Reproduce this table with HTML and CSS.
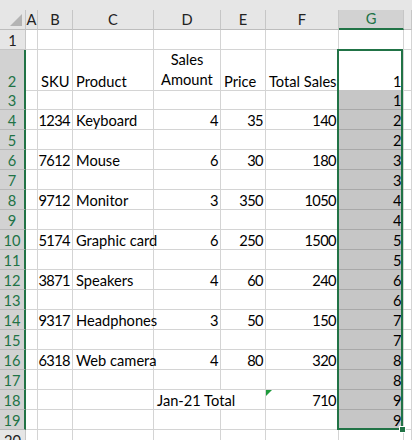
FILE: index.html
```html
<!DOCTYPE html>
<html>
<head>
<meta charset="utf-8">
<link rel="stylesheet" href="styles.css">
</head>
<body>
<div class="sheet">
  <div class="topband"></div>
  <div class="r hdr">
    <div class="corner"><span class="tri"></span></div>
    <div class="ch">A</div><div class="ch">B</div><div class="ch">C</div><div class="ch">D</div><div class="ch">E</div><div class="ch">F</div><div class="ch selh">G</div><div class="ch"></div>
  </div>
  <div class="r"><div class="rh">1</div><div class="c"></div><div class="c"></div><div class="c"></div><div class="c"></div><div class="c"></div><div class="c"></div><div class="c"></div><div class="c"></div></div>
  <div class="r tall"><div class="rh sel">2</div><div class="c"></div><div class="c t">SKU</div><div class="c t">Product</div><div class="c wrap">Sales<br>Amount</div><div class="c t">Price</div><div class="c t">Total Sales</div><div class="c n">1</div><div class="c"></div></div>
  <div class="r"><div class="rh sel">3</div><div class="c"></div><div class="c"></div><div class="c"></div><div class="c"></div><div class="c"></div><div class="c"></div><div class="c n g">1</div><div class="c"></div></div>
  <div class="r"><div class="rh sel">4</div><div class="c"></div><div class="c n">1234</div><div class="c t">Keyboard</div><div class="c n">4</div><div class="c n">35</div><div class="c n">140</div><div class="c n g">2</div><div class="c"></div></div>
  <div class="r"><div class="rh sel">5</div><div class="c"></div><div class="c"></div><div class="c"></div><div class="c"></div><div class="c"></div><div class="c"></div><div class="c n g">2</div><div class="c"></div></div>
  <div class="r"><div class="rh sel">6</div><div class="c"></div><div class="c n">7612</div><div class="c t">Mouse</div><div class="c n">6</div><div class="c n">30</div><div class="c n">180</div><div class="c n g">3</div><div class="c"></div></div>
  <div class="r"><div class="rh sel">7</div><div class="c"></div><div class="c"></div><div class="c"></div><div class="c"></div><div class="c"></div><div class="c"></div><div class="c n g">3</div><div class="c"></div></div>
  <div class="r"><div class="rh sel">8</div><div class="c"></div><div class="c n">9712</div><div class="c t">Monitor</div><div class="c n">3</div><div class="c n">350</div><div class="c n">1050</div><div class="c n g">4</div><div class="c"></div></div>
  <div class="r"><div class="rh sel">9</div><div class="c"></div><div class="c"></div><div class="c"></div><div class="c"></div><div class="c"></div><div class="c"></div><div class="c n g">4</div><div class="c"></div></div>
  <div class="r"><div class="rh sel">10</div><div class="c"></div><div class="c n">5174</div><div class="c t">Graphic card</div><div class="c n">6</div><div class="c n">250</div><div class="c n">1500</div><div class="c n g">5</div><div class="c"></div></div>
  <div class="r"><div class="rh sel">11</div><div class="c"></div><div class="c"></div><div class="c"></div><div class="c"></div><div class="c"></div><div class="c"></div><div class="c n g">5</div><div class="c"></div></div>
  <div class="r"><div class="rh sel">12</div><div class="c"></div><div class="c n">3871</div><div class="c t">Speakers</div><div class="c n">4</div><div class="c n">60</div><div class="c n">240</div><div class="c n g">6</div><div class="c"></div></div>
  <div class="r"><div class="rh sel">13</div><div class="c"></div><div class="c"></div><div class="c"></div><div class="c"></div><div class="c"></div><div class="c"></div><div class="c n g">6</div><div class="c"></div></div>
  <div class="r"><div class="rh sel">14</div><div class="c"></div><div class="c n">9317</div><div class="c t">Headphones</div><div class="c n">3</div><div class="c n">50</div><div class="c n">150</div><div class="c n g">7</div><div class="c"></div></div>
  <div class="r"><div class="rh sel">15</div><div class="c"></div><div class="c"></div><div class="c"></div><div class="c"></div><div class="c"></div><div class="c"></div><div class="c n g">7</div><div class="c"></div></div>
  <div class="r"><div class="rh sel">16</div><div class="c"></div><div class="c n">6318</div><div class="c t">Web camera</div><div class="c n">4</div><div class="c n">80</div><div class="c n">320</div><div class="c n g">8</div><div class="c"></div></div>
  <div class="r"><div class="rh sel">17</div><div class="c"></div><div class="c"></div><div class="c"></div><div class="c"></div><div class="c"></div><div class="c"></div><div class="c n g">8</div><div class="c"></div></div>
  <div class="r"><div class="rh sel">18</div><div class="c"></div><div class="c"></div><div class="c"></div><div class="c t span2">Jan-21 Total</div><div class="c n flag">710<span class="err"></span></div><div class="c n g">9</div><div class="c"></div></div>
  <div class="r"><div class="rh sel">19</div><div class="c"></div><div class="c"></div><div class="c"></div><div class="c"></div><div class="c"></div><div class="c"></div><div class="c n g">9</div><div class="c"></div></div>
  <div class="r"><div class="rh">20</div><div class="c"></div><div class="c"></div><div class="c"></div><div class="c"></div><div class="c"></div><div class="c"></div><div class="c"></div><div class="c"></div></div>
  <div class="selection"></div>
  <div class="handle"></div>
</div>
</body>
</html>
```

FILE: styles.css
```css
html, body {
  margin: 0;
  padding: 0;
  background: #ffffff;
}
.sheet {
  position: relative;
  width: 412px;
  height: 440px;
  overflow: hidden;
  font-family: Lato, "Open Sans", sans-serif;
  font-size: 14.67px;
  color: #000;
}
.topband {
  height: 10px;
  background: #e6e6e6;
}
.r {
  display: grid;
  grid-template-columns: 26px 12px 35px 81px 67px 45px 73px 65px 1fr;
  height: 20px;
}
.r.tall {
  height: 40px;
}
.r > div {
  box-sizing: border-box;
  border-right: 1px solid #d4d4d4;
  border-bottom: 1px solid #d4d4d4;
  display: flex;
  align-items: flex-end;
  white-space: nowrap;
  overflow: visible;
  min-width: 0;
}
.hdr {
  background: #e6e6e6;
}
.hdr > div {
  border-right: 1px solid #c6c6c6;
  border-bottom: 1px solid #bdbdbd;
  align-items: center;
  justify-content: center;
  color: #222;
  padding-bottom: 1px;
}
.hdr > .corner {
  position: relative;
  border-right: 1px solid #c6c6c6;
}
.tri {
  position: absolute;
  right: 3px;
  bottom: 3px;
  width: 0;
  height: 0;
  border-left: 12px solid transparent;
  border-bottom: 12px solid #b4b4b4;
}
.hdr > .selh {
  background: #d2d2d2;
  border-bottom: 2px solid #217346;
  color: #217346;
}
.rh {
  background: #e6e6e6;
  justify-content: center;
  border-right-color: #c6c6c6 !important;
  border-bottom-color: #c6c6c6 !important;
  color: #222;
}
.rh.sel {
  background: #d2d2d2;
  border-right: 2px solid #217346 !important;
  color: #217346;
  border-bottom-color: #b8b8b8 !important;
}
.c.t {
  padding-left: 3px;
}
.c.n {
  justify-content: flex-end;
  padding-right: 2px;
  letter-spacing: -0.6px;
}
.c.wrap {
  justify-content: center;
  text-align: center;
  line-height: 20px;
}
.c.span2 {
  grid-column: span 2;
}
.c.flag {
  position: relative;
}
.err {
  position: absolute;
  left: 0;
  top: 0;
  width: 0;
  height: 0;
  border-top: 6px solid #1e9a3c;
  border-right: 6px solid transparent;
}
.c.g {
  background: #c6c6c6;
  border-bottom-color: #a8a8a8;
}
.selection {
  position: absolute;
  left: 337px;
  top: 49px;
  width: 66px;
  height: 381px;
  box-sizing: border-box;
  border: 2px solid #217346;
}
.handle {
  position: absolute;
  left: 399px;
  top: 426px;
  width: 7px;
  height: 7px;
  box-sizing: border-box;
  border: 1px solid #ffffff;
  background: #217346;
}
```
